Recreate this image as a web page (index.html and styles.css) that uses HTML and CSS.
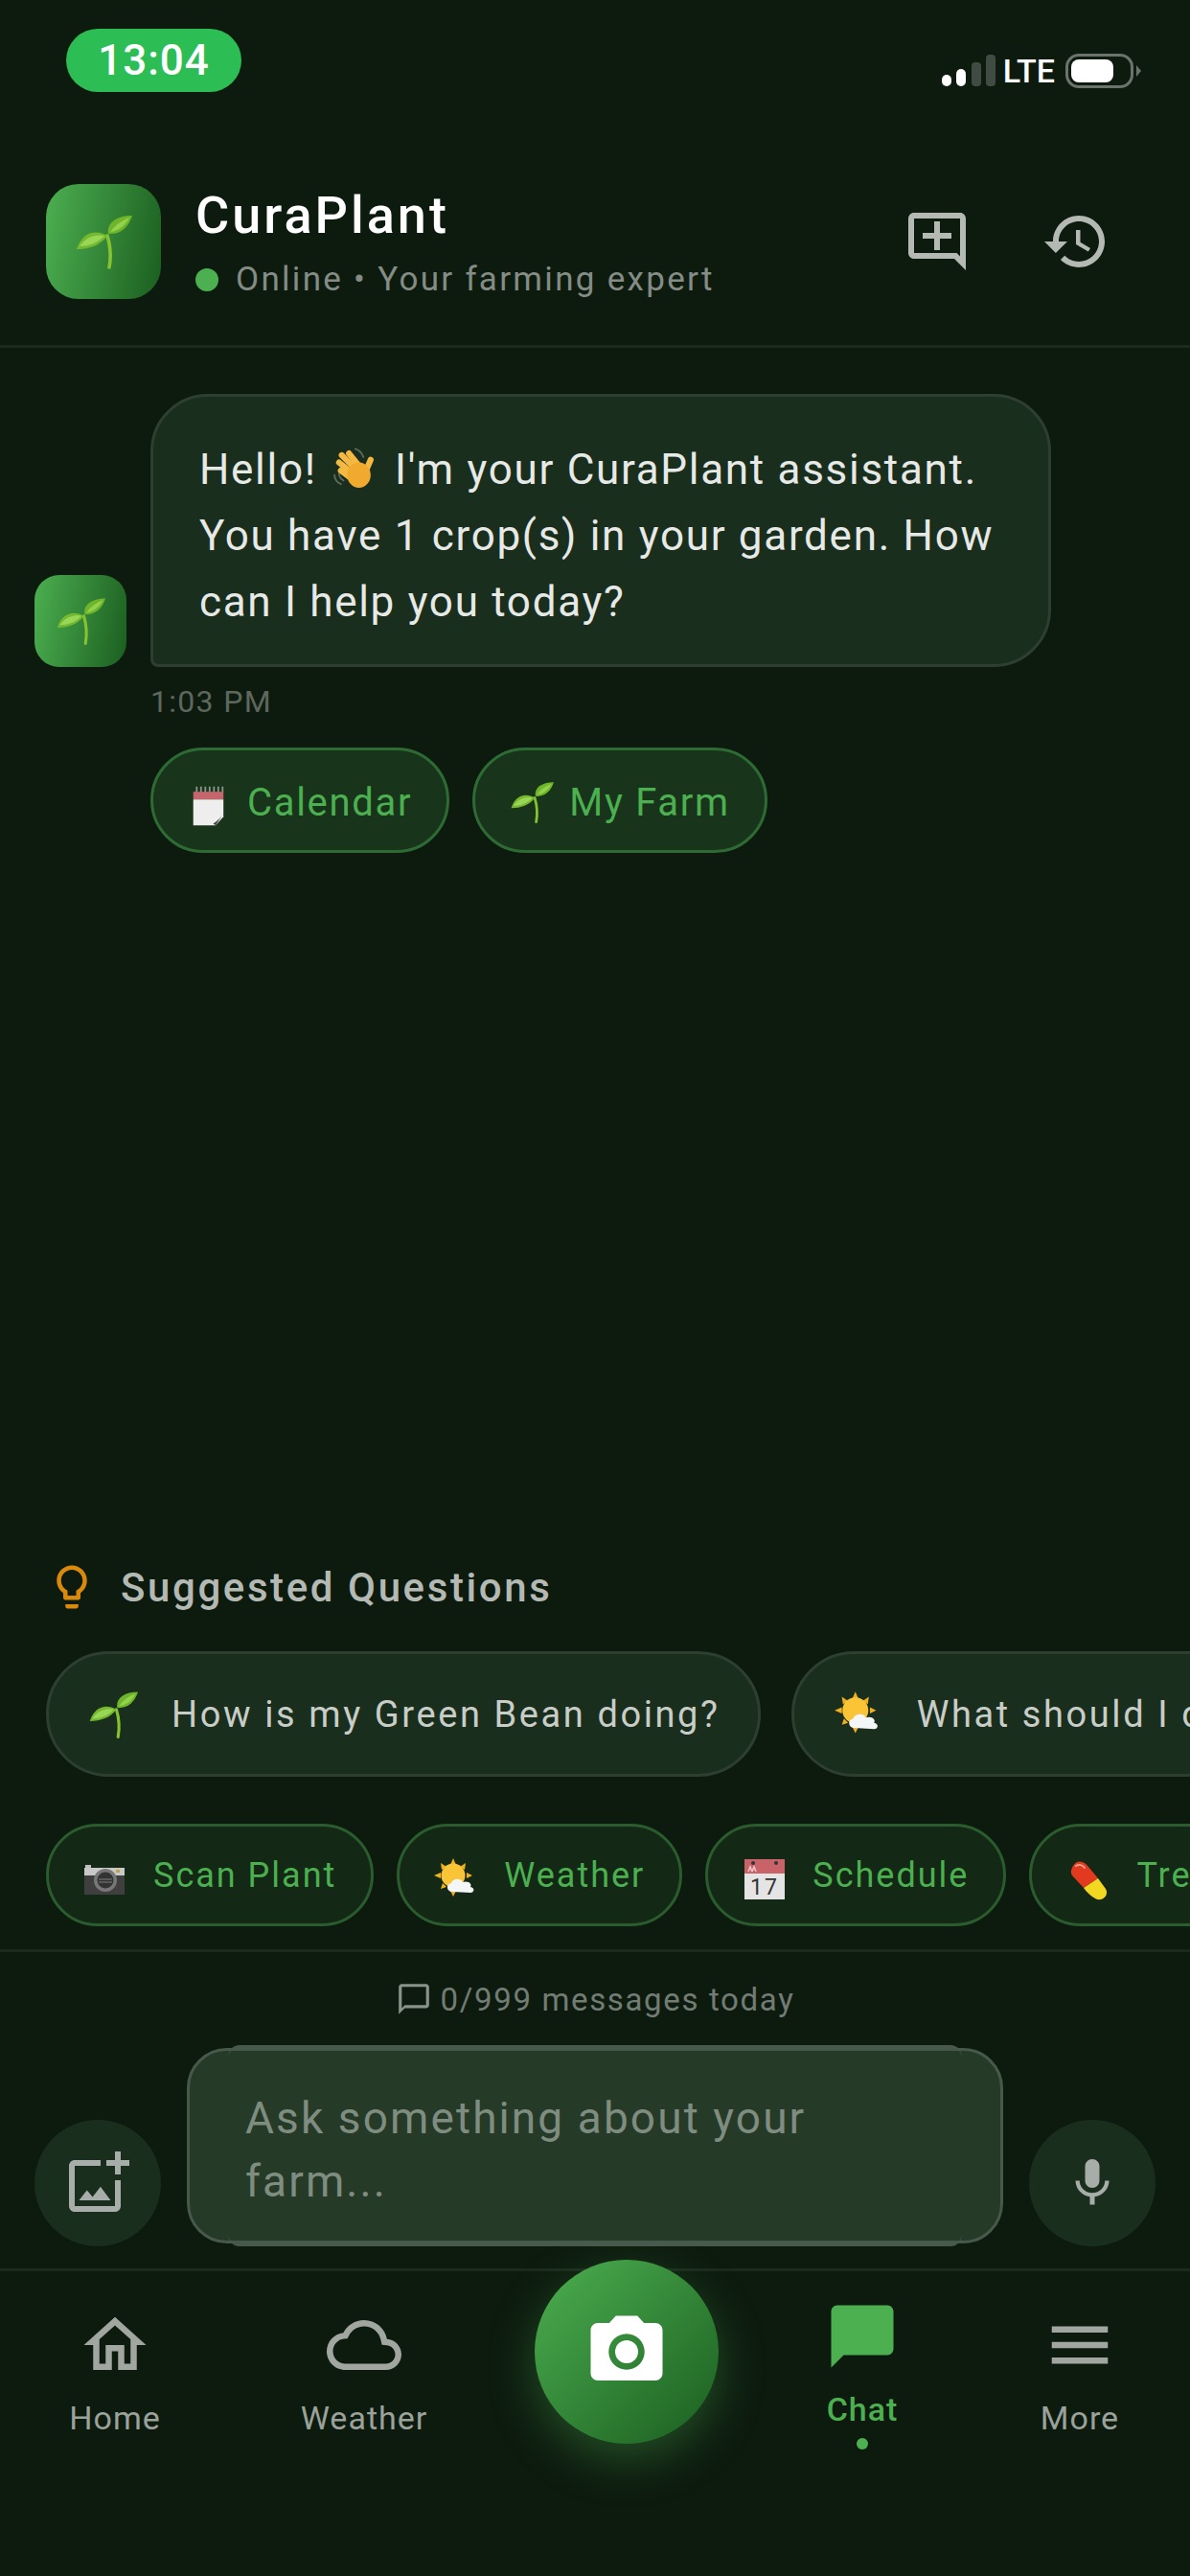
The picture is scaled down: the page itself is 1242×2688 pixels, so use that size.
FILE: index.html
```html
<!DOCTYPE html>
<html>
<head>
	<meta charset="UTF-8">
	<title>CuraPlant</title>
	<link rel="stylesheet" href="styles.css">
</head>
<body>
	<!-- emoji set, drawn once and reused -->
	<svg class="defs" width="0" height="0">
		<symbol id="e-seedling" viewBox="0 0 60 60">
			<path d="M34 24C37 34 38.500 44 36 57" fill="none" stroke="#86c232" stroke-width="3.600" stroke-linecap="round"/>
			<path d="M35 22C33 11 43 3 60 3C56 15 48 23 35 22Z" fill="#6fb52c"/>
			<path d="M37 20C42 13 49 8 57 5C53 13 46 19 37 20Z" fill="#93d04c"/>
			<path d="M34 24C22 17 8 20 2 38C15 38 27 34 34 24Z" fill="#74b92f"/>
			<path d="M31 24C21 22 11 26 5 35C15 35 25 31 31 24Z" fill="#9ad655"/>
		</symbol>
		<symbol id="e-wave" viewBox="0 0 70 70">
			<g fill="none" stroke="#5c6a5e" stroke-width="2" stroke-linecap="round">
				<path d="M38 10C42 11 45 14 47 19"/>
				<path d="M15 39C15 43 18 47 22 49"/>
				<path d="M20 37C20 40 22 43 25 45"/>
			</g>
			<g fill="none" stroke="#f4b942" stroke-width="6.600" stroke-linecap="round">
				<path d="M23 17L38 32"/>
				<path d="M31 15L43 30"/>
				<path d="M20 25L35 37"/>
				<path d="M22 34L34 43"/>
				<path d="M55 22L49 36"/>
			</g>
			<ellipse cx="42" cy="39" rx="13" ry="14" fill="#f0ab2e"/>
		</symbol>
		<symbol id="e-notepad" viewBox="0 0 60 60">
			<g stroke="#8c948c" stroke-width="2">
				<path d="M17 12V19M22 12V19M27 12V19M32 12V19M37 12V19M42 12V19M47 12V19"/>
			</g>
			<rect x="13" y="18" width="35" height="9" fill="#c4666b"/>
			<path d="M13 27H48V47L39 57H13Z" fill="#eeeeee"/>
			<path d="M48 43L39 57L36 55C41 52 45 48 48 43Z" fill="#4a4a4a"/>
		</symbol>
		<symbol id="e-camera" viewBox="0 0 48 48">
			<rect x="3" y="9" width="6" height="4" fill="#bfbfbf"/>
			<rect x="2" y="12" width="42" height="9" fill="#c9c9c9"/>
			<rect x="2" y="20" width="42" height="20" fill="#3f3f3f"/>
			<rect x="35" y="14" width="4" height="3" fill="#c8a53c"/>
			<circle cx="24" cy="25" r="12" fill="#777"/>
			<circle cx="24" cy="25" r="8.500" fill="#333"/>
			<path d="M17 24H31M17 27H31" stroke="#666" stroke-width="1.500"/>
		</symbol>
		<symbol id="e-sun-cloud" viewBox="0 0 48 48">
			<g fill="#f2b01e">
				<path d="M21 2L24 9H18Z"/>
				<path d="M8 7L14 11L9 14Z"/>
				<path d="M34 7L33 14L28 11Z"/>
				<path d="M1 20L8 17V23Z"/>
				<path d="M8 34L10 28L14 32Z"/>
				<path d="M21 42L18 36H24Z"/>
				<path d="M41 20L35 23V17Z"/>
			</g>
			<circle cx="21" cy="20" r="12.500" fill="#f9c436"/>
			<path transform="translate(0 2)" d="M20 35C14 35 13 27 19 26C20 21 29 20 31 25C37 23 41 27 39 30C44 31 43 36 39 36Z" fill="#f4f6f8"/>
		</symbol>
		<symbol id="e-calendar" viewBox="0 0 48 48">
			<rect x="3" y="3" width="42" height="42" fill="#e4e4e4"/>
			<rect x="3" y="3" width="42" height="15" fill="#c8636a"/>
			<circle cx="12" cy="7" r="2" fill="#333"/>
			<circle cx="36" cy="7" r="2" fill="#333"/>
			<path d="M7 16L9 11L11 16M11 16L13 11L15 16" fill="none" stroke="#f0c8ca" stroke-width="1.500"/>
			<text x="24" y="40" text-anchor="middle" class="cal-day">17</text>
		</symbol>
		<symbol id="e-pill" viewBox="0 0 48 48">
			<path d="M8 10C12 3 20 5 24 11L34 23L19 33L7 20C5 17 6 13 8 10Z" fill="#e13a1e"/>
			<path d="M19 33L34 23L42 34C46 41 38 48 31 44C27 42 22 37 19 33Z" fill="#f3d822"/>
			<path d="M11 10C14 8 18 9 20 12" fill="none" stroke="#f7a08c" stroke-width="2" stroke-linecap="round"/>
		</symbol>
	</svg>

	<div class="screen">
		<div class="status">
			<div class="time">13:04</div>
			<div class="status-right">
				<svg class="signal" width="56" height="36" viewBox="0 0 56 36">
					<rect x="0" y="22" width="10" height="12" rx="5" fill="#fff"/>
					<rect x="15" y="16" width="10" height="18" rx="5" fill="#fff"/>
					<rect x="31" y="9" width="10" height="25" rx="4" fill="#404c43"/>
					<rect x="46" y="1" width="10" height="33" rx="4" fill="#404c43"/>
				</svg>
				<span class="lte">LTE</span>
				<div class="battery"><i></i></div>
				<div class="battery-tip"></div>
			</div>
		</div>

		<div class="app-header">
			<div class="logo"><svg width="60" height="60"><use href="#e-seedling"/></svg></div>
			<div class="app-info">
				<div class="app-name">CuraPlant</div>
				<div class="app-sub"><i class="online"></i>Online • Your farming expert</div>
			</div>
			<div class="app-actions">
				<svg width="72" height="72" viewBox="0 0 24 24"><path d="M22 4c0-1.100-.9-2-2-2H4c-1.100 0-2 .9-2 2v12c0 1.100.9 2 2 2h14l4 4V4zm-2 13.170L18.830 16H4V4h16v13.170zM13 5h-2v4H7v2h4v4h2v-4h4V9h-4z"/></svg>
				<svg width="72" height="72" viewBox="0 0 24 24"><path d="M13 3c-4.970 0-9 4.030-9 9H1l3.890 3.890.07.14L9 12H6c0-3.870 3.130-7 7-7s7 3.130 7 7-3.130 7-7 7c-1.930 0-3.680-.79-4.940-2.060l-1.420 1.420C8.270 19.990 10.510 21 13 21c4.970 0 9-4.030 9-9s-4.030-9-9-9zm-1 5v5l4.280 2.540.72-1.210-3.500-2.080V8H12z"/></svg>
			</div>
		</div>

		<div class="messages">
			<div class="msg-row">
				<div class="msg-avatar"><svg width="52" height="52"><use href="#e-seedling"/></svg></div>
				<div class="bubble">Hello! <svg class="wave" width="66" height="66"><use href="#e-wave"/></svg> I'm your CuraPlant assistant.<br>You have 1 crop(s) in your garden. How<br>can I help you today?</div>
			</div>
			<div class="msg-time">1:03 PM</div>
			<div class="msg-chips">
				<div class="msg-chip"><svg width="54" height="54"><use href="#e-notepad"/></svg>Calendar</div>
				<div class="msg-chip farm"><svg width="46" height="46"><use href="#e-seedling"/></svg>My Farm</div>
			</div>
		</div>

		<div class="suggest">
			<div class="suggest-title">
				<svg width="54" height="54" viewBox="0 0 24 24"><path d="M9 21c0 .55.45 1 1 1h4c.55 0 1-.45 1-1v-1H9v1zm3-19C8.140 2 5 5.140 5 9c0 2.380 1.190 4.470 3 5.740V17c0 .55.45 1 1 1h6c.55 0 1-.45 1-1v-2.260c1.810-1.270 3-3.360 3-5.740 0-3.860-3.140-7-7-7zm2.850 11.100l-.85.6V16h-4v-2.300l-.85-.6C7.800 12.160 7 10.630 7 9c0-2.760 2.240-5 5-5s5 2.240 5 5c0 1.630-.8 3.160-2.150 4.100z"/></svg>
				Suggested Questions
			</div>
			<div class="q-row">
				<div class="q-chip"><svg width="52" height="52"><use href="#e-seedling"/></svg>How is my Green Bean doing?</div>
				<div class="q-chip"><svg width="52" height="52"><use href="#e-sun-cloud"/></svg>What should I do today?</div>
			</div>
			<div class="a-row">
				<div class="a-chip"><svg width="48" height="48"><use href="#e-camera"/></svg>Scan Plant</div>
				<div class="a-chip"><svg width="48" height="48"><use href="#e-sun-cloud"/></svg>Weather</div>
				<div class="a-chip"><svg width="48" height="48"><use href="#e-calendar"/></svg>Schedule</div>
				<div class="a-chip"><svg width="48" height="48"><use href="#e-pill"/></svg>Treatment</div>
			</div>
		</div>

		<div class="composer">
			<div class="msg-count">
				<svg width="38" height="38" viewBox="0 0 24 24"><path d="M20 2H4c-1.100 0-2 .9-2 2v18l4-4h14c1.100 0 2-.9 2-2V4c0-1.100-.9-2-2-2zm0 14H6l-2 2V4h16v12z"/></svg>
				0/999 messages today
			</div>
			<div class="input-row">
				<div class="round-btn"><svg width="72" height="72" viewBox="0 0 24 24"><path d="M18 20H4V6h9V4H4c-1.100 0-2 .9-2 2v14c0 1.100.9 2 2 2h14c1.100 0 2-.9 2-2v-9h-2v9zm-7.790-3.170l-1.960-2.360L5.500 18h11l-3.540-4.710zM20 4V1h-2v3h-3c.01.01 0 2 0 2h3v2.990c.01.01 2 0 2 0V6h3V4h-3z"/></svg></div>
				<div class="input">Ask something about your<br>farm...</div>
				<div class="round-btn"><svg width="60" height="60" viewBox="0 0 24 24"><path d="M12 14c1.660 0 2.990-1.340 2.990-3L15 5c0-1.660-1.340-3-3-3S9 3.340 9 5v6c0 1.660 1.340 3 3 3zm5.300-3c0 3-2.540 5.100-5.300 5.100S6.700 14 6.700 11H5c0 3.410 2.720 6.230 6 6.720V21h2v-3.280c3.280-.48 6-3.300 6-6.720h-1.700z"/></svg></div>
			</div>
		</div>

		<div class="nav">
			<div class="nav-item">
				<svg width="78" height="78" viewBox="0 0 24 24"><path d="M12 5.690l5 4.500V18h-2v-6H9v6H7v-7.810l5-4.500M12 3L2 12h3v8h6v-6h2v6h6v-8h3L12 3z"/></svg>
				<span>Home</span>
			</div>
			<div class="nav-item">
				<svg width="78" height="78" viewBox="0 0 24 24"><path d="M12 6c2.620 0 4.880 1.860 5.390 4.430l.3 1.500 1.530.11c1.560.1 2.780 1.410 2.780 2.960 0 1.650-1.350 3-3 3H6c-2.210 0-4-1.790-4-4 0-2.050 1.530-3.760 3.560-3.970l1.070-.11.5-.95C8.080 7.140 9.940 6 12 6m0-2C9.110 4 6.600 5.640 5.350 8.040 2.340 8.360 0 10.910 0 14c0 3.310 2.690 6 6 6h13c2.760 0 5-2.240 5-5 0-2.640-2.050-4.780-4.650-4.960C18.670 6.590 15.640 4 12 4z"/></svg>
				<span>Weather</span>
			</div>
			<div class="nav-cam">
				<svg width="90" height="90" viewBox="0 0 24 24"><circle cx="12" cy="12" r="3.200"/><path d="M9 2L7.170 4H4c-1.100 0-2 .9-2 2v12c0 1.100.9 2 2 2h16c1.100 0 2-.9 2-2V6c0-1.100-.9-2-2-2h-3.170L15 2H9zm3 15c-2.760 0-5-2.240-5-5s2.240-5 5-5 5 2.240 5 5-2.240 5-5 5z"/></svg>
			</div>
			<div class="nav-item active">
				<svg width="78" height="78" viewBox="0 0 24 24"><path d="M20 2H4c-1.100 0-2 .9-2 2v18l4-4h14c1.100 0 2-.9 2-2V4c0-1.100-.9-2-2-2z"/></svg>
				<span>Chat</span>
				<i class="nav-dot"></i>
			</div>
			<div class="nav-item">
				<svg width="78" height="78" viewBox="0 0 24 24"><path d="M3 18h18v-2H3v2zm0-5h18v-2H3v2zm0-7v2h18V6H3z"/></svg>
				<span>More</span>
			</div>
		</div>
	</div>
</body>
</html>
```

FILE: styles.css
```css
*{margin: 0;padding: 0;box-sizing: border-box;}
body{background: #0d1b0f;font-family: Roboto, "Noto Sans", sans-serif;}
i{display: block;font-style: normal;}
svg{display: block;flex: none;}
.defs{position: absolute;}
.cal-day{font-family: Roboto, sans-serif;font-size: 23px;fill: #333;}

.screen{width: 1242px;height: 2688px;display: flex;flex-direction: column;overflow: hidden;background: #0d1b0f;}

/* status bar */
.status{height: 143px;flex: none;display: flex;justify-content: space-between;align-items: flex-start;padding: 30px 51px 0 69px;}
.time{width: 183px;height: 66px;line-height: 66px;text-align: center;border-radius: 33px;background: #2dbd55;color: #fff;font-size: 44px;font-weight: 500;letter-spacing: 1px;}
.status-right{display: flex;align-items: center;margin-top: 24px;height: 40px;}
.signal{margin-right: 8px;}
.lte{color: #fff;font-size: 34px;font-weight: 500;margin-right: 11px;}
.battery{width: 71px;height: 36px;border: 3px solid #6b736c;border-radius: 14px;padding: 3px;}
.battery i{width: 44px;height: 100%;background: #fff;border-radius: 8px;}
.battery-tip{width: 0;height: 0;margin-left: 3px;border-left: 5px solid #6b736c;border-top: 6px solid transparent;border-bottom: 6px solid transparent;}

/* header */
.app-header{height: 220px;flex: none;display: flex;align-items: center;padding: 0 83px 0 48px;border-bottom: 3px solid #1c2a1e;}
.logo{width: 120px;height: 120px;border-radius: 34px;background: linear-gradient(100deg, #4caf50, #1b5e20);display: flex;align-items: center;justify-content: center;}
.app-info{flex: 1;margin-left: 36px;padding-top: 4px;}
.app-name{font-size: 54px;line-height: 62px;font-weight: 500;color: #fff;letter-spacing: 3px;}
.app-sub{display: flex;align-items: center;font-size: 35px;line-height: 44px;margin-top: 14px;color: #848c85;letter-spacing: 2.300px;}
.online{width: 24px;height: 24px;border-radius: 50%;background: #4caf50;margin-right: 18px;}
.app-actions{display: flex;gap: 73px;}
.app-actions svg{fill: #b4b9b4;}

/* messages */
.messages{flex: 1;padding: 48px 36px 0;}
.msg-row{display: flex;align-items: flex-end;gap: 25px;}
.msg-avatar{width: 96px;height: 96px;flex: none;border-radius: 26px;background: linear-gradient(100deg, #4caf50, #1b5e20);display: flex;align-items: center;justify-content: center;}
.bubble{width: 940px;height: 285px;padding: 42px 40px 0 48px;background: #1a2e1d;border: 3px solid #2d3f30;border-radius: 60px 60px 60px 8px;color: #e6e9e6;font-size: 44px;line-height: 69px;letter-spacing: 1.700px;}
.wave{display: inline-block;vertical-align: -10px;margin: -10px -2px -10px -8px;}
.msg-time{margin: 16px 0 0 121px;font-size: 32px;line-height: 40px;color: #5d675e;letter-spacing: 1.300px;}
.msg-chips{display: flex;gap: 24px;margin: 28px 0 0 121px;}
.msg-chip{height: 110px;display: flex;align-items: center;gap: 14px;padding: 4px 36px 0 30px;background: #18351b;border: 3px solid #2e6b34;border-radius: 55px;color: #4caf50;font-size: 40px;letter-spacing: 1.700px;}
.msg-chip.farm{padding-left: 36px;gap: 16px;}

/* suggested questions */
.suggest{flex: none;padding-bottom: 24px;border-bottom: 3px solid #1c2a1e;}
.suggest-title{height: 46px;display: flex;align-items: center;gap: 24px;padding-left: 48px;color: #b4b9b4;font-size: 42px;font-weight: 500;letter-spacing: 2.600px;}
.suggest-title svg{fill: #d98a0b;}
.q-row{display: flex;gap: 32px;margin-top: 44px;padding-left: 48px;}
.q-chip{height: 131px;flex: none;display: flex;align-items: center;gap: 35px;padding: 0 39px 0 41px;background: #1a2e1d;border: 3px solid #2d3f30;border-radius: 66px;color: #c8cdc8;font-size: 38px;letter-spacing: 2.600px;}
.a-row{display: flex;gap: 24px;margin-top: 49px;padding-left: 48px;}
.a-chip{height: 107px;flex: none;display: flex;align-items: center;gap: 26px;padding: 0 36px 0 35px;background: #132815;border: 3px solid #2a5c2e;border-radius: 54px;color: #4caf50;font-size: 36px;letter-spacing: 2px;}
.a-chip svg{margin-top: 8px;}

/* composer */
.composer{flex: none;padding: 0 36px 23px;}
.msg-count{height: 100px;display: flex;align-items: center;justify-content: center;gap: 9px;padding-bottom: 2px;color: #737c74;font-size: 33px;letter-spacing: 1.650px;}
.msg-count svg{fill: #8a928a;}
.input-row{display: flex;align-items: flex-end;gap: 27px;}
.round-btn{width: 132px;height: 132px;flex: none;border-radius: 50%;background: #1a2e1d;display: flex;align-items: center;justify-content: center;}
.round-btn svg{fill: #a7ada8;}
.input{position: relative;flex: 1;height: 204px;margin-bottom: 3px;padding: 37px 58px 0;background: #263a28;border: 3px solid #46594a;border-radius: 42px;color: #7f8c80;font-size: 46px;line-height: 66px;letter-spacing: 2.100px;}
.input::before{content: "";position: absolute;left: 40px;right: 40px;top: -6px;bottom: -6px;border-top: 3px solid #46594a;border-bottom: 3px solid #46594a;border-radius: 12px;}

/* bottom nav */
.nav{height: 321px;flex: none;display: grid;grid-template-columns: 240px 280px 268px 224px 230px;border-top: 3px solid #1c2a1e;}
.nav-item{display: flex;flex-direction: column;align-items: center;padding-top: 38px;color: #9ba19b;font-size: 34px;letter-spacing: 1px;}
.nav-item svg{fill: #a1a6a1;}
.nav-item span{line-height: 40px;margin-top: 17px;}
.nav-item.active{padding-top: 29px;color: #4caf50;font-weight: 500;}
.nav-item.active svg{fill: #4caf50;}
.nav-dot{width: 12px;height: 12px;margin-top: 10px;border-radius: 50%;background: #4caf50;}
.nav-cam{width: 192px;height: 192px;margin-top: -12px;justify-self: center;border-radius: 50%;background: linear-gradient(135deg, #4caf50, #1b5e20);box-shadow: 0 16px 48px rgba(76,175,80,.35);display: flex;align-items: center;justify-content: center;}
.nav-cam svg{fill: #fff;}
```
